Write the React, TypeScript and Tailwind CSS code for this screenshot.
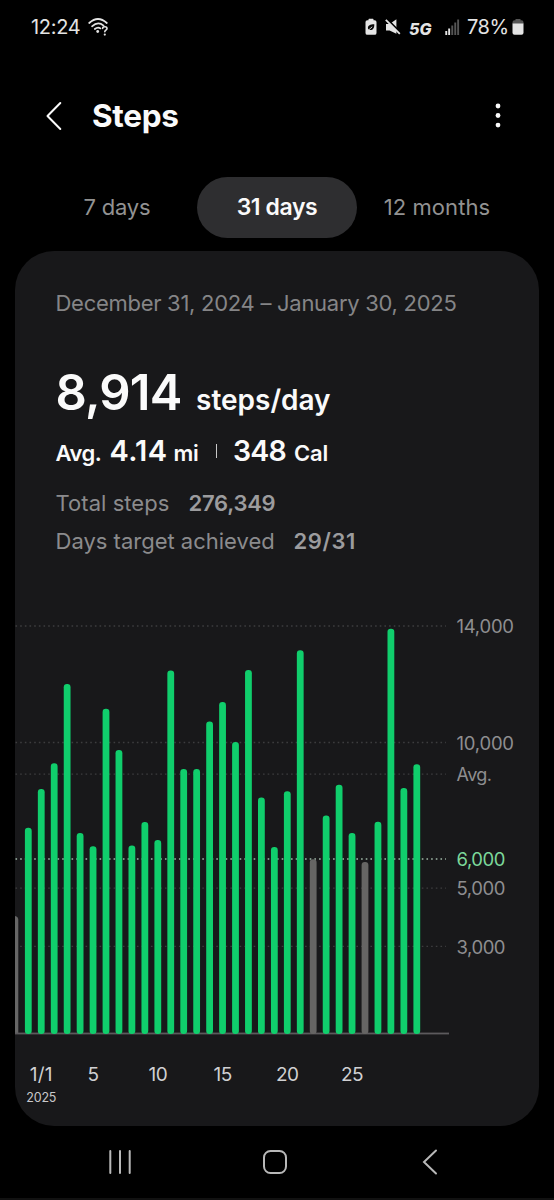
import React from 'react';

interface DayBar {
  steps: number;
}

interface GridLine {
  value: number;
  label: string;
}

const GOAL = 6000;
const BASELINE = 443;
const PX_PER_STEP = 0.02912;
const FIRST_X = 13.3;
const BAR_STEP = 12.95;

// Dec 31 through Jan 30
const days: DayBar[] = [
  7070, 8400, 9290, 12010, 6890, 6440, 11160, 9740, 6460, 7270, 6650, 12470, 9090, 9090, 10720,
  11390, 10020, 12490, 8110, 6410, 8330, 13170, 5990, 7490, 8550, 6890, 5900, 7280, 13910, 8440, 9250,
].map((steps) => ({ steps }));

const gridLines: GridLine[] = [
  { value: 14000, label: '14,000' },
  { value: 10000, label: '10,000' },
  { value: 8914, label: 'Avg.' },
  { value: GOAL, label: '6,000' },
  { value: 5000, label: '5,000' },
  { value: 3000, label: '3,000' },
];

const dayLabels = [
  { index: 1, text: '1/1' },
  { index: 5, text: '5' },
  { index: 10, text: '10' },
  { index: 15, text: '15' },
  { index: 20, text: '20' },
  { index: 25, text: '25' },
];

const yFor = (steps: number) => BASELINE + 0.7 - steps * PX_PER_STEP;
const xFor = (index: number) => FIRST_X + index * BAR_STEP;

const StatusBar: React.FC = () => (
  <div className="flex h-[54px] items-center justify-between pl-[31px] pr-[30px] text-[#e4e4e4]">
    <div className="flex items-center">
      <span className="w-[57px] text-[20px] tracking-[-0.3px]">12:24</span>
      <svg width="22" height="20" viewBox="0 0 22 20" fill="none" stroke="currentColor" strokeLinecap="round">
        <path d="M1.2 6 Q10 -2 18.8 6" strokeWidth="1.7" />
        <path d="M4 9.3 Q10 3.8 15.6 8.6" strokeWidth="1.7" />
        <path d="M6.8 12 Q9.8 9.5 12.4 11.4" strokeWidth="1.7" />
        <circle cx="9.7" cy="14.5" r="1.4" fill="currentColor" stroke="none" />
        <path d="M14.6 11.4 C14.8 9.1 19.2 9.2 19 11.6 C18.9 13.2 16.8 13 16.8 14.7" strokeWidth="1.6" />
        <circle cx="16.8" cy="17.6" r="1.1" fill="currentColor" stroke="none" />
      </svg>
    </div>
    <div className="flex items-center">
      <svg width="12" height="18" viewBox="0 0 12 18">
        <path d="M3.5 2.2 V1.4 Q3.5 0.8 4.1 0.8 H7.9 Q8.5 0.8 8.5 1.4 V2.2 H9.6 Q11.5 2.2 11.5 4.1 V14.9 Q11.5 16.8 9.6 16.8 H2.4 Q0.5 16.8 0.5 14.9 V4.1 Q0.5 2.2 2.4 2.2 Z" fill="currentColor" />
        <path d="M9.3 6.3 C5 6.3 3 7.5 2.9 9.8 C2.8 11 3.6 12 5 12.1 C8 12.3 9.4 10 9.3 6.3 Z" fill="#080808" />
        <path d="M2.5 13 L7.2 8.8" stroke="#e4e4e4" strokeWidth="0.9" />
      </svg>
      <svg className="ml-[8px]" width="16" height="18" viewBox="0 0 16 18">
        <path d="M1 6 H4.6 L11.4 1.2 V15.8 L4.6 12.4 H1 Z" fill="currentColor" />
        <path d="M1.7 0.8 L15.5 14.6" stroke="#000" strokeWidth="2" />
        <path d="M0.8 1.8 L14.8 15.8" stroke="currentColor" strokeWidth="1.8" />
      </svg>
      <span className="ml-[8px] mt-[4px] w-[36px] text-[16px] font-extrabold italic leading-none tracking-[0px]">5G</span>
      <svg width="15" height="16" viewBox="0 0 15 16">
        <rect x="0.3" y="12" width="1.9" height="4" fill="#e4e4e4" />
        <rect x="3.2" y="9.5" width="1.9" height="6.5" fill="#e4e4e4" />
        <rect x="6.3" y="6.5" width="1.9" height="9.5" fill="#555" />
        <rect x="9.3" y="3.5" width="1.9" height="12.5" fill="#555" />
        <rect x="12.2" y="0.5" width="1.9" height="15.5" fill="#555" />
      </svg>
      <span className="ml-[7px] w-[45px] text-[20px] tracking-[-0.5px]">78%</span>
      <svg width="12" height="18" viewBox="0 0 12 18">
        <path d="M3.5 2.2 V1 H8.5 V2.2 H9.5 Q11.5 2.2 11.5 4.2 V6 H0.5 V4.2 Q0.5 2.2 2.5 2.2 Z" fill="#555" />
        <path d="M0.5 5.5 H11.5 V14.8 Q11.5 16.8 9.5 16.8 H2.5 Q0.5 16.8 0.5 14.8 Z" fill="currentColor" />
      </svg>
    </div>
  </div>
);

const Header: React.FC = () => (
  <div className="flex h-[123px] items-center pl-[45px] pr-[50px] text-[#fafafa]">
    <svg width="18" height="30" viewBox="0 0 18 30" fill="none" stroke="currentColor" strokeWidth="2" strokeLinecap="round" strokeLinejoin="round">
      <path d="M15.3 2 L2.5 15 L15.3 28" />
    </svg>
    <h1 className="ml-[29px] text-[31.5px] font-bold tracking-[-0.3px]">Steps</h1>
    <svg className="ml-auto" width="12" height="26" viewBox="0 0 12 26" fill="currentColor">
      <circle cx="6" cy="3" r="2.4" />
      <circle cx="6" cy="12.5" r="2.4" />
      <circle cx="6" cy="22.1" r="2.4" />
    </svg>
  </div>
);

const Tabs: React.FC = () => (
  <div className="flex h-[61px] px-[37px] text-[22px] text-[#929292]">
    <div className="flex w-[160px] items-center justify-center tracking-[-0.2px]">7 days</div>
    <div className="flex w-[160px] items-center justify-center rounded-full bg-[#2e2e30] text-[23px] font-semibold tracking-[-0.4px] text-[#fafafa]">31 days</div>
    <div className="flex w-[160px] items-center justify-center tracking-[0.05px]">12 months</div>
  </div>
);

const Summary: React.FC = () => (
  <div className="flex flex-col px-[40.5px] pt-[36px]">
    <div className="h-8 whitespace-nowrap text-[22px] leading-8 tracking-[-0.28px] text-[#858587]">
      December 31, 2024 – January 30, 2025
    </div>
    <div className="mt-[42px] flex h-16 items-baseline whitespace-nowrap text-[#fafafa]">
      <span className="w-[140.5px] text-[49px] font-semibold leading-[64px] tracking-[-0.8px]">8,914</span>
      <span className="text-[28px] font-semibold tracking-[0px]">steps/day</span>
    </div>
    <div className="mt-[6px] flex h-10 items-baseline whitespace-nowrap font-semibold leading-10 text-[#fafafa]">
      <span className="w-[54px] text-[22px] tracking-[-0.5px]">Avg.</span>
      <span className="w-[64px] text-[29px] tracking-[0.3px]">4.14</span>
      <span className="w-[42.5px] text-[22px] tracking-[-0.4px]">mi</span>
      <span className="h-[14px] w-px -translate-y-[3px] bg-[#c8c8c8]" />
      <span className="ml-[16px] w-[61px] text-[28.5px] tracking-[-0.8px]">348</span>
      <span className="text-[22px] tracking-[-0.2px]">Cal</span>
    </div>
    <div className="mt-[13px] flex h-[38px] items-center text-[22px] text-[#8b8b8d]">
      <span className="w-[133px] tracking-[0.05px]">Total steps</span>
      <span className="font-semibold tracking-[-0.25px] text-[#9c9c9e]">276,349</span>
    </div>
    <div className="flex h-[38px] items-center text-[22px] text-[#8b8b8d]">
      <span className="w-[238px] tracking-[0px]">Days target achieved</span>
      <span className="font-semibold tracking-[0.6px] text-[#9c9c9e]">29/31</span>
    </div>
  </div>
);

const StepsChart: React.FC = () => (
  <svg className="mt-auto block shrink-0" width="524" height="536" viewBox="0 0 524 536">
    {/* Grid */}
    {gridLines.map(({ value, label }) => {
      const y = yFor(value);
      const isGoal = value === GOAL;
      return (
        <g key={label}>
          <line
            x1="0.5" y1={y} x2="431" y2={y}
            stroke={isGoal ? '#a0b8a8' : '#3d3d3f'}
            strokeWidth="1.3"
            strokeDasharray="1.6 3.07"
          />
          <text
            x="441.5" y={y + 7.2}
            fontSize={label === 'Avg.' ? 18 : 18.5}
            textLength={label === 'Avg.' ? 35.5 : value >= 10000 ? 57.5 : 49}
            fill={isGoal ? '#7cd89a' : '#8e8e90'}
          >
            {label}
          </text>
        </g>
      );
    })}

    {/* Dec 30 is cut off by the card edge */}
    <path d="M0 326 Q3.3 326.5 3.3 330 V443 H0 Z" fill="#666" />
    <rect x="0" y="442.6" width="434" height="1.8" fill="#5c5a5d" />

    {days.map(({ steps }, i) => (
      <rect
        key={i}
        x={xFor(i) - 3.4}
        y={yFor(steps)}
        width="6.8"
        height={444 - yFor(steps)}
        rx="3.2"
        fill={steps >= GOAL ? '#10ce6c' : '#666564'}
      />
    ))}

    {/* Dates */}
    {dayLabels.map(({ index, text }) => (
      <text key={text} x={xFor(index)} y="491" fontSize="19" letterSpacing={index === 1 ? 0.3 : -0.6} textAnchor="middle" fill="#d0d0d2">
        {text}
      </text>
    ))}
    <text x={xFor(1)} y="512" fontSize="12.5" letterSpacing="-0.2" textAnchor="middle" fill="#c8c8ca">2025</text>
  </svg>
);

const NavBar: React.FC = () => (
  <div className="flex h-[72px] items-center justify-between pl-[108px] pr-[114px]">
    <svg width="24" height="26" viewBox="0 0 24 26" stroke="#b8b8b8" strokeWidth="2" strokeLinecap="round">
      <path d="M2.3 2 V24 M12 2 V24 M21.7 2 V24" />
    </svg>
    <svg className="-ml-[4px]" width="26" height="26" viewBox="0 0 26 26" fill="none" stroke="#b8b8b8" strokeWidth="2">
      <rect x="2" y="2" width="22" height="22" rx="6.5" />
    </svg>
    <svg width="18" height="26" viewBox="0 0 18 26" fill="none" stroke="#b8b8b8" strokeWidth="2" strokeLinecap="round">
      <path d="M14 1.5 L2 13 L14 24.5" />
    </svg>
  </div>
);

export default function App() {
  return (
    <div className="flex h-[1200px] w-[554px] flex-col overflow-hidden bg-black font-['Inter','Liberation_Sans',sans-serif]">
      <StatusBar />
      <Header />
      <Tabs />
      <div className="ml-[15px] mt-[13px] flex h-[875px] w-[524px] flex-col overflow-hidden rounded-[39px] bg-[#18181a]">
        <Summary />
        <StepsChart />
      </div>
      <NavBar />
      <div className="h-[2px] bg-[#111]" />
    </div>
  );
}
